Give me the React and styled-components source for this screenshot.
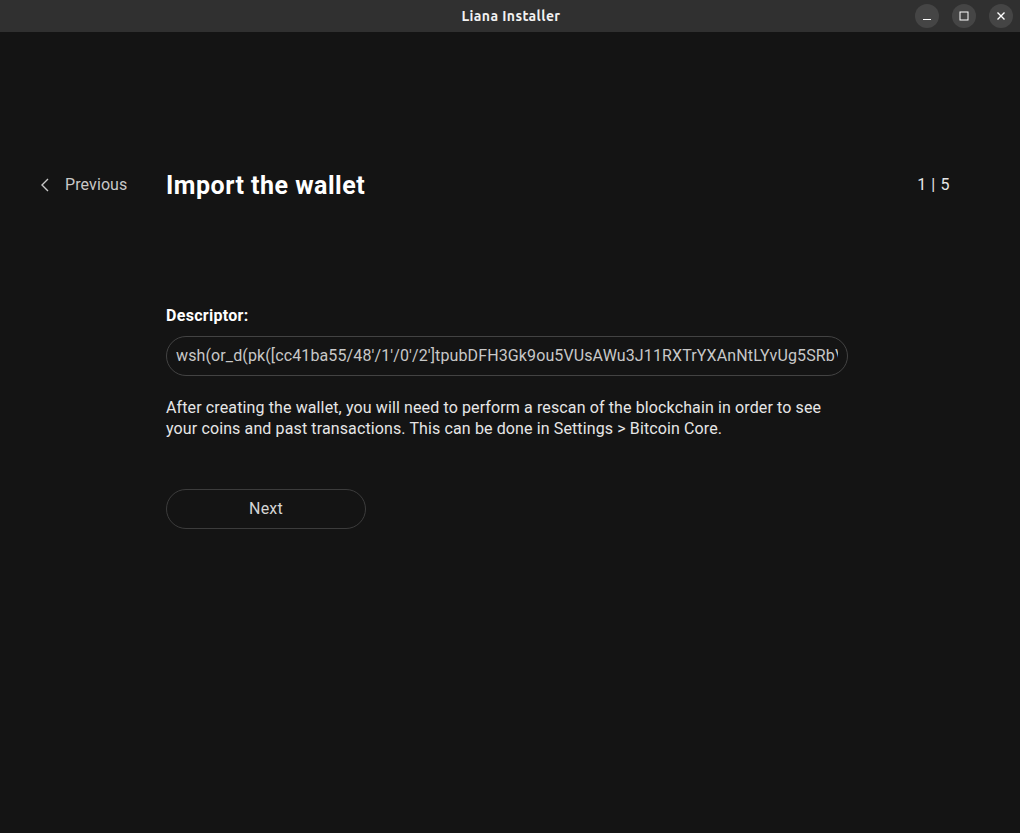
import { createGlobalStyle, styled } from 'styled-components'

const GlobalStyle = createGlobalStyle`
  html, body {
    margin: 0;
    padding: 0;
    background: #141414;
  }
  body {
    font-family: Roboto, "Liberation Sans", sans-serif;
    color: #e6e6e6;
  }
`

const Window = styled.div`
  width: 1020px;
  height: 833px;
  display: flex;
  flex-direction: column;
  background: #141414;
  overflow: hidden;
`

const TitleBar = styled.div`
  height: 32px;
  flex: none;
  background: #303030;
  display: flex;
  align-items: center;
  justify-content: center;
  position: relative;
`

const TitleText = styled.span`
  font-family: "Ubuntu", "DejaVu Sans Condensed", "Liberation Sans Narrow", sans-serif;
  font-weight: 700;
  font-size: 14px;
  color: #f2f2f2;
  letter-spacing: 0.4px;
  margin-left: 2px;
`

const WindowButtons = styled.div`
  position: absolute;
  right: 7px;
  top: 4px;
  display: flex;
  gap: 13px;
`

const WinButton = styled.button`
  width: 24px;
  height: 24px;
  border-radius: 50%;
  border: none;
  padding: 0;
  background: #454545;
  display: flex;
  align-items: center;
  justify-content: center;
  color: #ffffff;
`

const Main = styled.div`
  flex: 1;
  padding: 139px 70px 0 40px;
  display: flex;
  flex-direction: column;
`

const Header = styled.div`
  display: grid;
  grid-template-columns: 126px 1fr auto;
  align-items: center;
  height: 28px;
`

const BackLink = styled.a`
  display: flex;
  align-items: center;
  gap: 15px;
  color: #c8c8c8;
  font-size: 16px;
  letter-spacing: 0.1px;
  margin-top: -2px;
  cursor: pointer;
`

const PageTitle = styled.h1`
  margin: 0;
  font-size: 25px;
  font-weight: 700;
  color: #ffffff;
  letter-spacing: 0.5px;
`

const Step = styled.span`
  font-size: 16px;
  color: #e6e6e6;
  letter-spacing: 0.6px;
  margin-top: -2px;
`

const Content = styled.div`
  margin-left: 126px;
  width: 682px;
  padding-top: 107px;
  display: flex;
  flex-direction: column;
`

const FieldLabel = styled.label`
  font-size: 16px;
  font-weight: 700;
  color: #ffffff;
  letter-spacing: 0.3px;
  margin-bottom: 11px;
`

const DescriptorField = styled.div`
  box-sizing: border-box;
  width: 100%;
  height: 40px;
  border-radius: 20px;
  border: 1px solid #434343;
  padding: 0 9px;
  display: flex;
  align-items: center;
`

const DescriptorText = styled.span`
  flex: 1;
  min-width: 0;
  color: #c8c8c8;
  font-size: 16px;
  letter-spacing: 0.12px;
  white-space: nowrap;
  overflow: hidden;
  padding-bottom: 1px;
`

const Note = styled.p`
  margin: 21px 0 0;
  font-size: 16px;
  line-height: 21px;
  letter-spacing: 0.12px;
  color: #e6e6e6;
`

const NextButton = styled.button`
  margin-top: 50px;
  width: 200px;
  height: 40px;
  border-radius: 20px;
  border: 1px solid #3c3c3c;
  background: transparent;
  color: #d4d4d4;
  font-family: inherit;
  font-size: 16px;
  letter-spacing: 0.2px;
  padding-bottom: 2px;
  cursor: pointer;
`

const descriptor = "wsh(or_d(pk([cc41ba55/48'/1'/0'/2']tpubDFH3Gk9ou5VUsAWu3J11RXTrYXAnNtLYvUg5SRbV9aGwcsRDEdR1wZ7Vi2eWSVbZXmeJzs5PqJqkZ1kGuVsDfLmv8wgPN5smbrjvJxAH/<0;1>/*),and_v(v:pkh([cc41ba55/48'/1'/1'/2']tpubDF9rZ6ADjWJ8xZXNbmc8aPTjqRBNbMWz2oBjNi8umCZr9eF8sLexhQ2eMm1b4LFe2F6D5RYJrrzCHcCm1U8j9YBzHbRPSqB8xCVQuA6j/<0;1>/*),older(65535))))#ay4cp7hx"

export default function App() {
  return (
    <Window>
      <GlobalStyle />
      <TitleBar>
        <TitleText>Liana Installer</TitleText>
        <WindowButtons>
          <WinButton aria-label="minimize">
            <svg width="10" height="10" viewBox="0 0 10 10">
              <rect x="1" y="8" width="8" height="1" fill="#fff" />
            </svg>
          </WinButton>
          <WinButton aria-label="maximize">
            <svg width="10" height="10" viewBox="0 0 10 10">
              <rect x="1" y="1" width="8" height="8" fill="none" stroke="#fff" strokeWidth="1" />
            </svg>
          </WinButton>
          <WinButton aria-label="close">
            <svg width="10" height="10" viewBox="0 0 10 10">
              <path d="M1.5 1.5 L8.5 8.5 M8.5 1.5 L1.5 8.5" stroke="#fff" strokeWidth="1.4" />
            </svg>
          </WinButton>
        </WindowButtons>
      </TitleBar>
      <Main>
        <Header>
          <BackLink>
            <svg width="10" height="16" viewBox="0 0 10 16">
              <path d="M8 2 L2 8 L8 14" fill="none" stroke="#c8c8c8" strokeWidth="1.4" />
            </svg>
            Previous
          </BackLink>
          <PageTitle>Import the wallet</PageTitle>
          <Step>1 | 5</Step>
        </Header>
        <Content>
          <FieldLabel>Descriptor:</FieldLabel>
          <DescriptorField>
            <DescriptorText>{descriptor}</DescriptorText>
          </DescriptorField>
          <Note>
            After creating the wallet, you will need to perform a rescan of the blockchain in order to see
            your coins and past transactions. This can be done in Settings &gt; Bitcoin Core.
          </Note>
          <div>
            <NextButton>Next</NextButton>
          </div>
        </Content>
      </Main>
    </Window>
  )
}
